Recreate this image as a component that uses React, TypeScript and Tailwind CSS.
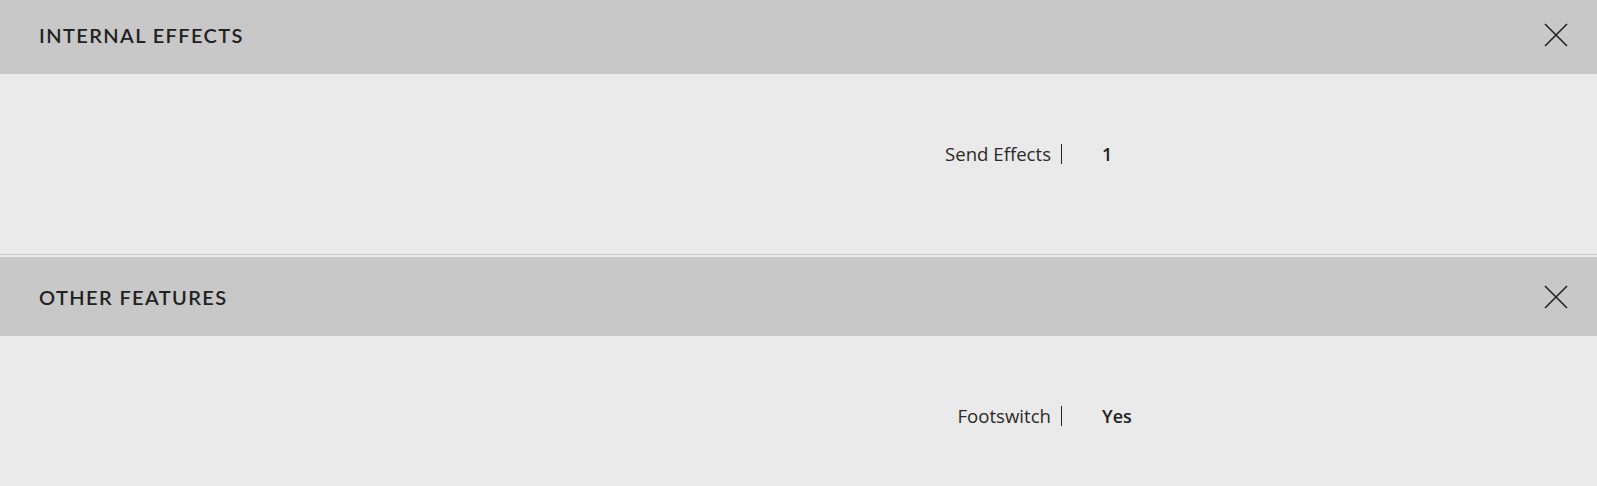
const sections = [
  { title: "Internal Effects", label: "Send Effects", value: "1" },
  { title: "Other Features", label: "Footswitch", value: "Yes" },
];

function CloseIcon() {
  return (
    <svg width="24" height="24" viewBox="0 0 24 24" fill="none" stroke="#222" strokeWidth="1.6" aria-hidden="true">
      <line x1="1" y1="1" x2="23" y2="23" />
      <line x1="23" y1="1" x2="1" y2="23" />
    </svg>
  );
}

export default function App() {
  return (
    <div className="h-[486px] overflow-hidden bg-[#eaeaea] text-[#222]">
      <div className="-mt-[5px]">
        {sections.map((s) => (
          <section key={s.title} className="mb-[2px]">
            <div className="flex h-[79px] items-center justify-between bg-[#c8c8c8] pl-[39px] pr-[29px]">
              <h2 className="font-['Lato',sans-serif] text-[20px] font-semibold uppercase tracking-[0.07em]">
                {s.title}
              </h2>
              <button type="button" aria-label="Close" className="flex">
                <CloseIcon />
              </button>
            </div>
            <div className="h-[181px] border-b border-[#c8c8c8] pt-[70px] font-['Open_Sans',sans-serif]">
              <div className="flex items-center">
                <div className="flex w-[66.5%] justify-end">
                  <span className="border-r border-[#222] pr-[10px] text-[18.6px] leading-[20px] font-normal text-[#2a2a2a]">
                    {s.label}
                  </span>
                </div>
                <div className="pl-[40px] text-[18px] leading-[20px] font-semibold">{s.value}</div>
              </div>
            </div>
          </section>
        ))}
      </div>
    </div>
  );
}
